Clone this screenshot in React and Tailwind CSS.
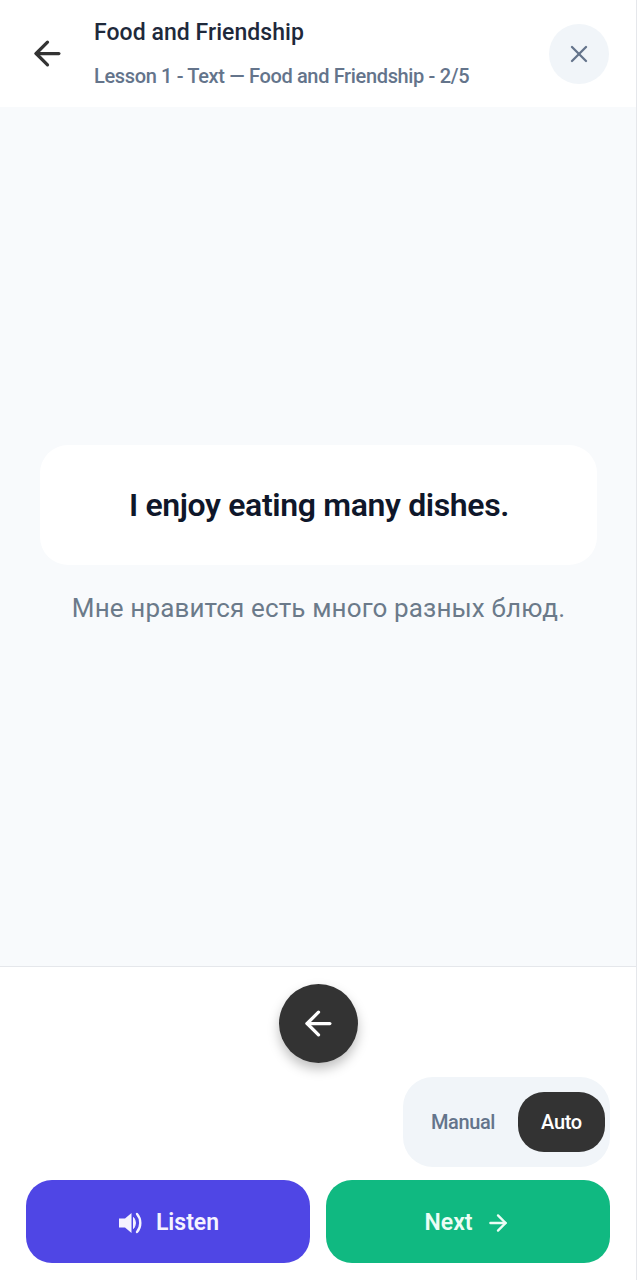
import { ArrowLeft, ArrowRight, X } from "lucide-react";

function SpeakerIcon() {
  return (
    <svg width="24" height="22" viewBox="0 0 24 22" fill="none">
      <path d="M0 6.500h6L12.500 1v20L6 15.500H0z" fill="currentColor" />
      <path d="M14.500 5.500c2.500 3.300 2.500 7.700 0 11z" fill="currentColor" stroke="currentColor" strokeLinejoin="round" />
      <path d="M18 2c4.400 5 4.400 13 0 18" stroke="currentColor" strokeWidth="2.400" strokeLinecap="round" />
    </svg>
  );
}

export default function App() {
  return (
    <div className="flex h-[1280px] w-[637px] flex-col border-r border-[#e5e7eb] bg-white font-['Roboto',sans-serif]">
      <header className="flex h-[107px] items-center bg-white pl-[28px] pr-[27px]">
        <button className="mr-[27px] text-[#333333]">
          <ArrowLeft size={39} strokeWidth={2} />
        </button>
        <div className="flex-1">
          <h1 className="-mt-[1px] text-[23px] leading-[28px] font-medium tracking-[0.05px] text-[#1e293b]">Food and Friendship</h1>
          <p className="mt-[17px] text-[20px] leading-[24px] font-medium tracking-[-0.35px] text-[#64748b]">
            Lesson 1 - Text — Food and Friendship - 2/5
          </p>
        </div>
        <button className="flex h-[60px] w-[60px] items-center justify-center rounded-full bg-[#f1f5f9] text-[#64748b]">
          <X size={28} strokeWidth={2} />
        </button>
      </header>

      <main className="flex flex-1 flex-col items-center justify-center bg-[#f8fafc] pb-[4px] pl-[40px] pr-[39px]">
        <div className="flex h-[120px] w-full items-center justify-center rounded-[28px] bg-white">
          <p className="ml-[1px] text-[32px] font-semibold tracking-[-0.36px] text-[#0f172a]">I enjoy eating many dishes.</p>
        </div>
        <p className="mt-[27px] text-[26px] leading-[32px] tracking-[0.14px] text-[#6b7a8a]">Мне нравится есть много разных блюд.</p>
      </main>

      <footer className="flex h-[314px] flex-col border-t border-[#e5e7eb] bg-white px-[26px]">
        <div className="mt-[17px] flex justify-center">
          <button className="flex h-[79px] w-[79px] items-center justify-center rounded-full bg-[#333333] text-white shadow-[0_6px_12px_rgba(0,0,0,0.25)]">
            <ArrowLeft size={39} strokeWidth={2} />
          </button>
        </div>
        <div className="mt-[14px] flex justify-end">
          <div className="flex h-[90px] w-[207px] items-center justify-between rounded-[30px] bg-[#f1f5f9] pl-[28px] pr-[5px]">
            <span className="text-[20px] font-medium tracking-[-0.4px] text-[#64748b]">Manual</span>
            <span className="flex h-[60px] w-[87px] items-center justify-center rounded-[26px] bg-[#333333] text-[20px] font-medium tracking-[-0.3px] text-white">
              Auto
            </span>
          </div>
        </div>
        <div className="mt-[13px] flex gap-[16px]">
          <button className="flex h-[83px] w-[284px] items-center justify-center gap-[13px] rounded-[26px] bg-[#4f46e5] pl-[2px] pt-[3px] text-[23px] font-semibold text-[#f5f3ff]">
            <SpeakerIcon />
            Listen
          </button>
          <button className="flex h-[83px] w-[284px] items-center justify-center gap-[12px] rounded-[26px] bg-[#10b981] pr-[1px] pt-[3px] text-[23px] font-semibold text-[#ecfdf5]">
            Next
            <ArrowRight size={26} strokeWidth={2.2} />
          </button>
        </div>
      </footer>
    </div>
  );
}
